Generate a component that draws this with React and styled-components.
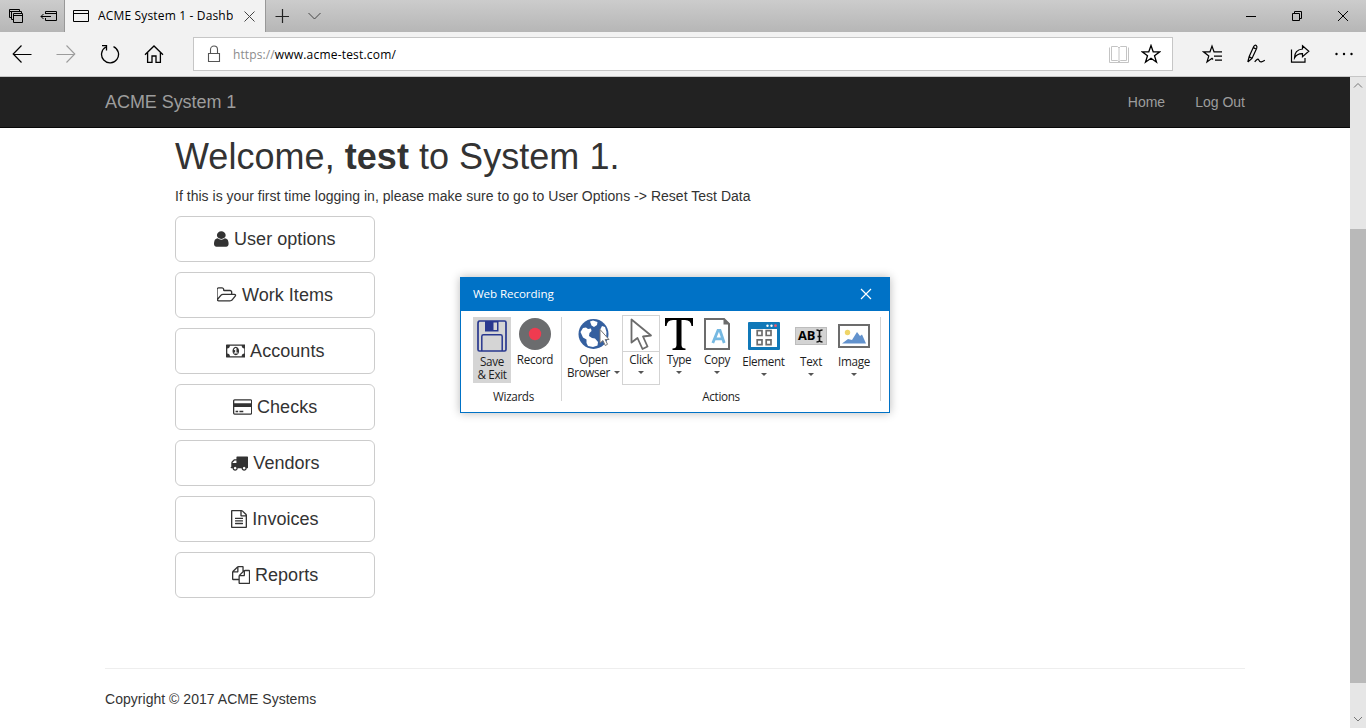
import React from 'react';
import styled, { createGlobalStyle } from 'styled-components';

const Global = createGlobalStyle`
  * { box-sizing: border-box; }
  html, body { margin: 0; padding: 0; overflow: hidden; }
  svg { display: block; flex: none; }
`;

const uiFont = `'Open Sans', 'Noto Sans', sans-serif`;

const Screen = styled.div`
  width: 1366px;
  height: 728px;
  display: flex;
  flex-direction: column;
  overflow: hidden;
  background: #fff;
  font-family: 'Liberation Sans', Arial, sans-serif;
  font-size: 14px;
  line-height: 20px;
  color: #333;
`;

/* Browser chrome */
const TabStrip = styled.div`
  height: 32px;
  flex: none;
  display: flex;
  background: linear-gradient(#cccccc, #b6b6b6);
`;
const Slot = styled.div`
  width: ${(p) => p.$w || 32}px;
  height: 100%;
  display: flex;
  align-items: center;
  justify-content: center;
`;
const Tab = styled.div`
  width: 202px;
  padding-left: 8px;
  display: flex;
  align-items: center;
  background: #f2f2f2;
  border-left: 1px solid #989898;
  border-right: 1px solid #989898;
  color: #000;
`;
const TabTitle = styled.div`
  width: 135px;
  margin: 0 11px 0 9px;
  overflow: hidden;
  white-space: nowrap;
  font: 12px/20px ${uiFont};
  letter-spacing: 0.16px;
`;
const Grow = styled.div`
  flex: 1;
`;
const Toolbar = styled.div`
  height: 45px;
  flex: none;
  display: flex;
  align-items: center;
  background: #f2f2f2;
  border-bottom: 1px solid #c6c6c6;
`;
const Address = styled.div`
  width: 980px;
  height: 34px;
  margin: 0 17px;
  padding: 0 11px 0 13px;
  display: flex;
  align-items: center;
  background: #fff;
  border: 1px solid #c6c6c6;
`;
const Url = styled.div`
  margin-left: 12px;
  padding-top: 2px;
  flex: 1;
  font: 12px/20px ${uiFont};
  color: #000;
  letter-spacing: 0.2px;
`;
const Scheme = styled.span`
  color: #8c8c8c;
  letter-spacing: 0.1px;
`;
const ReaderIcon = styled.svg`
  margin-right: 12px;
`;

/* Page */
const Viewport = styled.div`
  flex: 1;
  display: flex;
  min-height: 0;
`;
const Page = styled.div`
  width: 1350px;
`;
const Navbar = styled.nav`
  height: 51px;
  padding: 0 105px;
  display: flex;
  align-items: center;
  background: #222;
  border-bottom: 1px solid #080808;
  color: #9d9d9d;
`;
const Brand = styled.div`
  flex: 1;
  font-size: 18px;
  letter-spacing: -0.06px;
`;
const NavLink = styled.a`
  margin-left: 30px;
`;
const Main = styled.main`
  padding: 9px 0 0 175px;
  height: 540px;
`;
const Heading = styled.h1`
  margin: 0 0 9px;
  font-size: 36px;
  font-weight: 400;
  line-height: 40px;
  letter-spacing: 0.04px;
`;
const Intro = styled.p`
  margin: 0 0 10px;
  letter-spacing: 0.02px;
`;
const MenuButton = styled.button`
  width: 200px;
  height: 46px;
  margin: 0 0 10px;
  padding: 0;
  display: flex;
  align-items: center;
  justify-content: center;
  gap: 5px;
  background: #fff;
  border: 1px solid #ccc;
  border-radius: 6px;
  color: #333;
  font: 18px/24px 'Liberation Sans', Arial, sans-serif;
  letter-spacing: 0.04px;
`;
const Footer = styled.footer`
  margin: 0 105px;
  padding-top: 20px;
  border-top: 1px solid #eee;
  letter-spacing: 0.03px;
`;
const ScrollTrack = styled.div`
  width: 16px;
  display: flex;
  flex-direction: column;
  align-items: center;
  background: #e6e6e6;
`;
const ScrollThumb = styled.div`
  width: 16px;
  height: 454px;
  margin: 136px 0 31px;
  background: #b9b9b9;
`;

/* Recording window */
const Dialog = styled.section`
  position: absolute;
  left: 460px;
  top: 277px;
  width: 430px;
  height: 136px;
  background: #fff;
  border: 1px solid #0072c6;
  box-shadow: 0 0 9px rgba(0, 0, 0, 0.28);
  font: 12px/13px ${uiFont};
  color: #1e1e1e;
`;
const DialogTitle = styled.header`
  height: 33px;
  padding: 0 17px 2px 12px;
  display: flex;
  align-items: center;
  justify-content: space-between;
  background: #0072c6;
  color: #fff;
  font-size: 11.6px;
  letter-spacing: -0.08px;
`;
const Ribbon = styled.div`
  height: 101px;
  padding: 4px 0 0 12px;
  display: flex;
`;
const Group = styled.div`
  width: ${(p) => p.$w}px;
  display: flex;
  flex-direction: column;
  align-items: center;
`;
const Tools = styled.div`
  width: 100%;
  height: 75px;
  display: flex;
  align-items: flex-start;
  gap: ${(p) => p.$gap || 0}px;
`;
const Divider = styled.div`
  width: 1px;
  height: 84px;
  margin: 2px 0 0 ${(p) => p.$gap}px;
  background: #d4d4d4;
`;
const Tool = styled.div`
  width: ${(p) => p.$w || 38}px;
  padding-top: ${(p) => (p.$low ? 5 : 3)}px;
  padding-left: ${(p) => p.$shift || 0}px;
  display: flex;
  flex-direction: column;
  align-items: center;
  white-space: nowrap;
`;
const SaveTool = styled(Tool)`
  height: 66px;
  margin-top: 2px;
  padding-top: 3px;
  background: #d5d5d5;
`;
const HoverTool = styled(Tool)`
  height: 70px;
  padding-top: 2px;
  border: 1px solid #d3d3d3;
`;
const IconBox = styled.div`
  height: 32px;
  margin-bottom: ${(p) => (p.$line ? 1 : 3)}px;
  display: flex;
  align-items: center;
`;
const Rule = styled.div`
  width: 100%;
  height: 1px;
  margin-bottom: 1px;
  background: #d3d3d3;
`;
const Caption = styled.div`
  display: flex;
  align-items: center;
  font-size: 11.7px;
  letter-spacing: -0.34px;
`;
const Caret = styled.i`
  width: 0;
  height: 0;
  margin: ${(p) => (p.$inline ? '0 0 0 4px' : '5px 0 0')};
  border: 3px solid transparent;
  border-top-color: #555;
  border-bottom: 0;
`;

const Line = ({ w = 20, h = 20, d, sw = 1, c = '#000', as: As = 'svg' }) => (
  <As width={w} height={h} viewBox={`0 0 ${w} ${h}`} fill="none" stroke={c} strokeWidth={sw}>
    <path d={d} />
  </As>
);

const glyphs = {
  user: ['256 0 1280 1792', 'M1536 1399q0 109-62.5 187t-150.5 78h-854q-88 0-150.5-78t-62.5-187q0-85 8.5-160.5t31.5-152 58.5-131 94-89 134.5-34.5q131 128 313 128t313-128q76 0 134.5 34.5t94 89 58.5 131 31.5 152 8.5 160.5zm-256-887q0 159-112.5 271.5t-271.5 112.5-271.5-112.5-112.5-271.5 112.5-271.5 271.5-112.5 271.5 112.5 112.5 271.5z', 14.6],
  folder: ['0 0 1920 1792', 'M1717 931q0-35-53-35h-1088q-40 0-85.5 21.5t-71.5 52.5l-294 363q-18 24-18 40 0 35 53 35h1088q40 0 86-22t71-53l294-363q18-22 18-39zm-1141-163h768v-160q0-40-28-68t-68-28h-576q-40 0-68-28t-28-68v-64q0-40-28-68t-68-28h-320q-40 0-68 28t-28 68v853l256-315q44-53 116-87.5t140-34.5zm1269 163q0 62-46 120l-295 363q-43 53-116 87.5t-140 34.5h-1088q-92 0-158-66t-66-158v-960q0-92 66-158t158-66h320q92 0 158 66t66 158v32h544q92 0 158 66t66 158v160h192q54 0 99 24.5t67 70.5q15 32 15 68z', 20],
  money: ['0 0 1920 1792', 'M768 1152h384v-96h-128v-448h-114l-148 137 77 80q42-37 55-57h2v288h-128v96zm512-256q0 70-21 142t-59.5 134-101.5 101-138 39-138-39-101.5-101-59.5-134-21-142 21-142 59.5-134 101.5-101 138-39 138 39 101.5 101 59.5 134 21 142zm512 256v-512q-106 0-181-75t-75-181h-1152q0 106-75 181t-181 75v512q106 0 181 75t75 181h1152q0-106 75-181t181-75zm128-832v1152q0 26-19 45t-45 19h-1792q-26 0-45-19t-19-45v-1152q0-26 19-45t45-19h1792q26 0 45 19t19 45z', 19.6],
  card: ['0 0 1920 1792', 'M1760 128q66 0 113 47t47 113v1216q0 66-47 113t-113 47h-1600q-66 0-113-47t-47-113v-1216q0-66 47-113t113-47h1600zm-1600 128q-13 0-22.5 9.5t-9.5 22.5v224h1664v-224q0-13-9.5-22.5t-22.5-9.5h-1600zm1600 1280q13 0 22.5-9.5t9.5-22.5v-608h-1664v608q0 13 9.5 22.5t22.5 9.5h1600zm-1504-128v-128h256v128h-256zm384 0v-128h384v128h-384z', 19.3],
  truck: ['0 0 1792 1792', 'M640 1408q0-52-38-90t-90-38-90 38-38 90 38 90 90 38 90-38 38-90zm-384-512h384v-256h-158q-13 0-22 9l-195 195q-9 9-9 22v30zm1280 512q0-52-38-90t-90-38-90 38-38 90 38 90 90 38 90-38 38-90zm256-1088v1024q0 15-4 26.5t-13.5 18.5-16.5 11.5-23.5 6-22.5 2-25.5 0-22.5-.5q0 106-75 181t-181 75-181-75-75-181h-384q0 106-75 181t-181 75-181-75-75-181h-64q-3 0-22.5.5t-25.5 0-22.5-2-23.5-6-16.5-11.5-13.5-18.5-4-26.5q0-26 19-45t45-19v-320q0-8-.5-35t0-38 2.5-34.5 6.5-37 14-30.5 22.5-30l198-198q19-19 50.5-32t58.5-13h160v-192q0-26 19-45t45-19h1024q26 0 45 19t19 45z', 18],
  file: ['128 0 1536 1792', 'M1596 380q28 28 48 76t20 88v1152q0 40-28 68t-68 28h-1344q-40 0-68-28t-28-68v-1600q0-40 28-68t68-28h896q40 0 88 20t76 48zm-444-244v376h376q-10-29-22-41l-313-313q-12-12-41-22zm384 1528v-1024h-416q-40 0-68-28t-28-68v-416h-768v1536h1280zm-1024-864q0-14 9-23t23-9h704q14 0 23 9t9 23v64q0 14-9 23t-23 9h-704q-14 0-23-9t-9-23v-64zm736 224q14 0 23 9t9 23v64q0 14-9 23t-23 9h-704q-14 0-23-9t-9-23v-64q0-14 9-23t23-9h704zm0 256q14 0 23 9t9 23v64q0 14-9 23t-23 9h-704q-14 0-23-9t-9-23v-64q0-14 9-23t23-9h704z', 16],
  files: ['0 0 1792 1792', 'M1696 384q40 0 68 28t28 68v1216q0 40-28 68t-68 28h-960q-40 0-68-28t-28-68v-288h-544q-40 0-68-28t-28-68v-672q0-40 20-88t48-76l408-408q28-28 76-48t88-20h416q40 0 68 28t28 68v328q68-40 128-40h416zm-544 213l-299 299h299v-299zm-640-384l-299 299h299v-299zm196 647l316-316v-416h-384v416q0 40-28 68t-68 28h-416v640h512v-256q0-40 20-88t48-76zm956 804v-1152h-384v416q0 40-28 68t-68 28h-416v640h896z', 18.2],
};

function Glyph({ name }) {
  const [box, d, width] = glyphs[name];
  return (
    <svg width={width} height="18" viewBox={box} preserveAspectRatio="none" fill="#333">
      <path d={d} />
    </svg>
  );
}

const menu = [
  ['user', 'User options'],
  ['folder', 'Work Items'],
  ['money', 'Accounts'],
  ['card', 'Checks'],
  ['truck', 'Vendors'],
  ['file', 'Invoices'],
  ['files', 'Reports'],
];

const starPath = 'M10 1.5L12.2 7.8H18.8L13.5 11.8L15.5 18.2L10 14.3L4.5 18.2L6.5 11.8L1.2 7.8H7.8Z';

function BrowserChrome() {
  return (
    <>
      <TabStrip>
        <Slot>
          <Line w={14} h={14} d="M.5 8.5V.5H10.5V2.5M.5 2.5H3M.5 8.5H2.5M2.5 10.5V2.5H12.5V4.5M2.5 10.5H4.5M4.5 4.5H13.5V13.5H4.5ZM4.5 6.5H13.5" />
        </Slot>
        <Slot>
          <Line w={17} h={12} d="M5.5 4V1.5H16.5V10.5H5.5V8M5.5 3.5H16.5M1 6.5H11M3.5 4L1 6.5L3.5 9" />
        </Slot>
        <Tab>
          <Line w={16} h={14} d="M.5 1.5H15.5V12.5H.5ZM.5 4.5H15.5" />
          <TabTitle>ACME System 1 - Dashboard</TabTitle>
          <Line w={11} h={11} c="#444" d="M.5 .5L10.5 10.5M10.5 .5L.5 10.5" />
        </Tab>
        <Slot><Line w={14} h={14} c="#222" sw={1.2} d="M7.5 0V14M.5 7.5H14" /></Slot>
        <Slot><Line w={13} h={8} c="#444" d="M.5 1L6.5 7L12.5 1" /></Slot>
        <Grow />
        <Slot $w={46}><Line w={10} h={10} d="M0 5.5H10" /></Slot>
        <Slot $w={46}><Line w={10} h={10} d="M.5 2.5H7.5V9.5H.5ZM2.5 2V.5H9.5V7.5H8" /></Slot>
        <Slot $w={46}><Line w={10} h={10} d="M0 0L10 10M10 0L0 10" /></Slot>
      </TabStrip>
      <Toolbar>
        <Slot $w={44}><Line sw={1.2} d="M9.5 1.5L1.2 10L9.5 18.5M1.2 10.5H19.5" /></Slot>
        <Slot $w={44}><Line sw={1.1} c="#9c9c9c" d="M10.5 1.5L18.8 10L10.5 18.5M18.8 10.5H.5" /></Slot>
        <Slot $w={44}><Line sw={1.3} d="M5.8 3A8.5 8.5 0 1 0 13.5 2.6M2 1.7H6.5V6.5" /></Slot>
        <Slot $w={44}><Line sw={1.3} d="M1 10.8L10 2L19 10.8M3.6 8.8V18.3H8V12H12V18.3H16.4V8.8" /></Slot>
        <Address>
          <Line w={14} h={18} c="#555" sw={1.1} d="M1.5 8.5H12.5V16.5H1.5ZM3.5 8.5V4.5A3.5 3.5 0 0 1 10.5 4.5V8.5" />
          <Url><Scheme>https://</Scheme>www.acme-test.com/</Url>
          <Line as={ReaderIcon} w={20} h={18} c="#c4c4c4" d="M.5 2.5V17.5H19.5V2.5M2.5 1.5H8.5L10 3L11.5 1.5H17.5V15.5H11.5L10 17L8.5 15.5H2.5ZM10 3V17" />
          <Line sw={1.3} d={starPath} />
        </Address>
        <Slot $w={44}><Line sw={1.2} d="M11 15.5L10 14.3L5 18L6.8 12L1.5 7.8H8L10 2L12 7.8H20M12 12.2H20M13 16.2H20" /></Slot>
        <Slot $w={44}><Line sw={1.2} d="M1.8 18L3.2 12.5L7.7 2.6Q9 .4 10.4 1.7Q11.4 2.7 10.6 4.6L6 14.4L1.8 18M7.4 3.6L10.5 5.2M3.2 12.5L6 14.4M8.7 17.8Q11.8 13.8 12.8 16T15.4 17.8T18.8 16.2" /></Slot>
        <Slot $w={44}><Line sw={1.2} d="M1.5 5.5V18.2H15V14M12.5 1.8L18.8 7.3L12.5 12.7V9.7Q7 9.5 4.5 14Q4.5 5.7 12.5 5Z" /></Slot>
        <Slot $w={44}><svg width="18" height="4" viewBox="0 0 18 4"><circle cx="1.5" cy="2" r="1.2" /><circle cx="9" cy="2" r="1.2" /><circle cx="16.5" cy="2" r="1.2" /></svg></Slot>
      </Toolbar>
    </>
  );
}

function Recorder() {
  return (
    <Dialog>
      <DialogTitle>
        <span>Web Recording</span>
        <Line w={12} h={12} c="#fff" sw={1.2} d="M1 1L11 11M11 1L1 11" />
      </DialogTitle>
      <Ribbon>
        <Group $w={81}>
          <Tools $gap={5}>
            <SaveTool>
              <IconBox>
                <svg width="30" height="32" viewBox="0 0 30 32" fill="none" stroke="#29388f" strokeWidth="1.7">
                  <path d="M2.5 1H27.5Q29 1 29 2.5V29.5Q29 31 27.5 31H2.5Q1 31 1 29.5V4Q1 1 2.5 1Z" />
                  <path d="M8 1V11.5H21.5V1" fill="#29388f" stroke="none" />
                  <rect x="16.5" y="2.5" width="3.5" height="7.5" fill="#d5d5d5" stroke="none" />
                  <path d="M4.8 31V16.5Q4.8 14.8 6.5 14.8H23.5Q25.2 14.8 25.2 16.5V31" strokeWidth="1.5" />
                </svg>
              </IconBox>
              <Caption>Save</Caption>
              <Caption>&amp; Exit</Caption>
            </SaveTool>
            <Tool>
              <IconBox>
                <svg width="32" height="32" viewBox="0 0 32 32"><circle cx="16" cy="16" r="16" fill="#6b6c6e" /><circle cx="16" cy="16" r="6.2" fill="#ef3b50" /></svg>
              </IconBox>
              <Caption>Record</Caption>
            </Tool>
          </Tools>
          <Caption>Wizards</Caption>
        </Group>
        <Divider $gap={7} />
        <Group $w={318}>
          <Tools>
            <Tool $w={60} $shift={3}>
              <IconBox>
                <svg width="32" height="32" viewBox="0 0 32 32">
                  <circle cx="15.5" cy="16" r="15" fill="#345f9f" />
                  <path d="M2.5 14L5 10L8 9.5L10 11L13 10.5L13.5 13L11.5 15L11 18L14 20L17 20.5L20 24L19.5 27.5L15 29L10 28L8.5 25L8.5 21.5L5 19.5Z" fill="#fff" />
                  <path d="M12 3.5L15 2.5L19.5 4L19 7L16 9L13.5 7.5ZM24 8L27 9L28.5 14L28 21L24 17L22 12Z" fill="#fff" />
                  <path d="M22 11.5V25L25 22.5L27.2 27.5L29.5 26.3L27.2 21.5H31Z" fill="#fff" stroke="#777" />
                </svg>
              </IconBox>
              <Caption>Open</Caption>
              <Caption>Browser<Caret $inline /></Caption>
            </Tool>
            <HoverTool>
              <IconBox $line>
                <svg width="24" height="32" viewBox="0 0 24 32" fill="#fff" stroke="#6b6b6b" strokeWidth="1.8" strokeLinejoin="round">
                  <path d="M2.5 1.5V24.5L8.5 20L13.5 31L18.5 28.5L14 18.5L22 17.5Z" />
                </svg>
              </IconBox>
              <Rule />
              <Caption>Click</Caption>
              <Caret />
            </HoverTool>
            <Tool>
              <IconBox>
                <svg width="28" height="32" viewBox="0 0 28 32"><path d="M0 0H28V8H26.5Q26 2 20 2H16.5V27Q16.5 30.5 20.5 30.5V32H7.5V30.5Q11.5 30.5 11.5 27V2H8Q2 2 1.5 8H0Z" fill="#000" /></svg>
              </IconBox>
              <Caption>Type</Caption>
              <Caret />
            </Tool>
            <Tool>
              <IconBox>
                <svg width="26" height="32" viewBox="0 0 26 32">
                  <path d="M1 1H20L25 6V31H1Z" fill="#fff" stroke="#6c6c6c" strokeWidth="2" />
                  <path d="M19.5 0L26 6.5H19.5Z" fill="#6c6c6c" />
                  <path d="M8.8 25L14 12.5H16L20.2 25M10.8 20.8H18.5" fill="none" stroke="#76b9e2" strokeWidth="2.8" />
                </svg>
              </IconBox>
              <Caption>Copy</Caption>
              <Caret />
            </Tool>
            <Tool $w={54} $low $shift={1}>
              <IconBox>
                <svg width="32" height="28" viewBox="0 0 32 28">
                  <rect width="32" height="28" rx="1" fill="#1078b8" /><rect x="3" y="7" width="26" height="18" fill="#fff" />
                  <circle cx="19.5" cy="3.7" r="1.2" fill="#fff" /><circle cx="23.5" cy="3.7" r="1.2" fill="#fff" /><circle cx="27.5" cy="3.7" r="1.4" fill="#f0566c" />
                  <path d="M9.2 8.7h4.8v4.8h-4.8zM18.2 8.7h4.8v4.8h-4.8zM9.2 17.9h4.8v4.8h-4.8zM18.2 17.9h4.8v4.8h-4.8z" fill="#fff" stroke="#6d6d6d" strokeWidth="1.7" />
                </svg>
              </IconBox>
              <Caption>Element</Caption>
              <Caret />
            </Tool>
            <Tool $w={42} $low>
              <IconBox>
                <svg width="32" height="18" viewBox="0 0 32 18">
                  <rect x=".5" y=".5" width="31" height="17" fill="#d3d3d3" stroke="#bdbdbd" />
                  <text x="3" y="13.3" fontSize="12" fontWeight="700" fontFamily="Open Sans" textLength="17.5" lengthAdjust="spacingAndGlyphs">AB</text>
                  <path d="M21.5 3Q24 3 24.5 4.2Q25 3 27.5 3M24.5 4V14M21.5 15Q24 15 24.5 13.8Q25 15 27.5 15M22.5 9.5H26.5" fill="none" stroke="#111" strokeWidth="1.6" />
                </svg>
              </IconBox>
              <Caption>Text</Caption>
              <Caret />
            </Tool>
            <Tool $w={44} $low>
              <IconBox>
                <svg width="32" height="24" viewBox="0 0 32 24">
                  <rect x="1" y="1" width="30" height="22" fill="#fff" stroke="#6c6c6c" strokeWidth="2" />
                  <circle cx="9.5" cy="8.5" r="2.7" fill="#efd568" />
                  <path d="M4 19.5L10 15L14 16L19 8L22 12L24 10.5L28 19.5Z" fill="#6292cd" />
                </svg>
              </IconBox>
              <Caption>Image</Caption>
              <Caret />
            </Tool>
          </Tools>
          <Caption>Actions</Caption>
        </Group>
        <Divider $gap={0} />
      </Ribbon>
    </Dialog>
  );
}

export default function App() {
  return (
    <Screen>
      <Global />
      <BrowserChrome />
      <Viewport>
        <Page>
          <Navbar>
            <Brand>ACME System 1</Brand>
            <NavLink>Home</NavLink>
            <NavLink>Log Out</NavLink>
          </Navbar>
          <Main>
            <Heading>Welcome, <b>test</b> to System 1.</Heading>
            <Intro>If this is your first time logging in, please make sure to go to User Options -&gt; Reset Test Data</Intro>
            {menu.map(([icon, label]) => (
              <MenuButton key={icon}><Glyph name={icon} />{label}</MenuButton>
            ))}
          </Main>
          <Footer>Copyright © 2017 ACME Systems</Footer>
        </Page>
        <ScrollTrack>
          <Line w={10} h={16} c="#777" d="M1 10.5L5 6.5L9 10.5" />
          <ScrollThumb />
          <Line w={10} h={10} c="#777" d="M1 3L5 7L9 3" />
        </ScrollTrack>
      </Viewport>
      <Recorder />
    </Screen>
  );
}
